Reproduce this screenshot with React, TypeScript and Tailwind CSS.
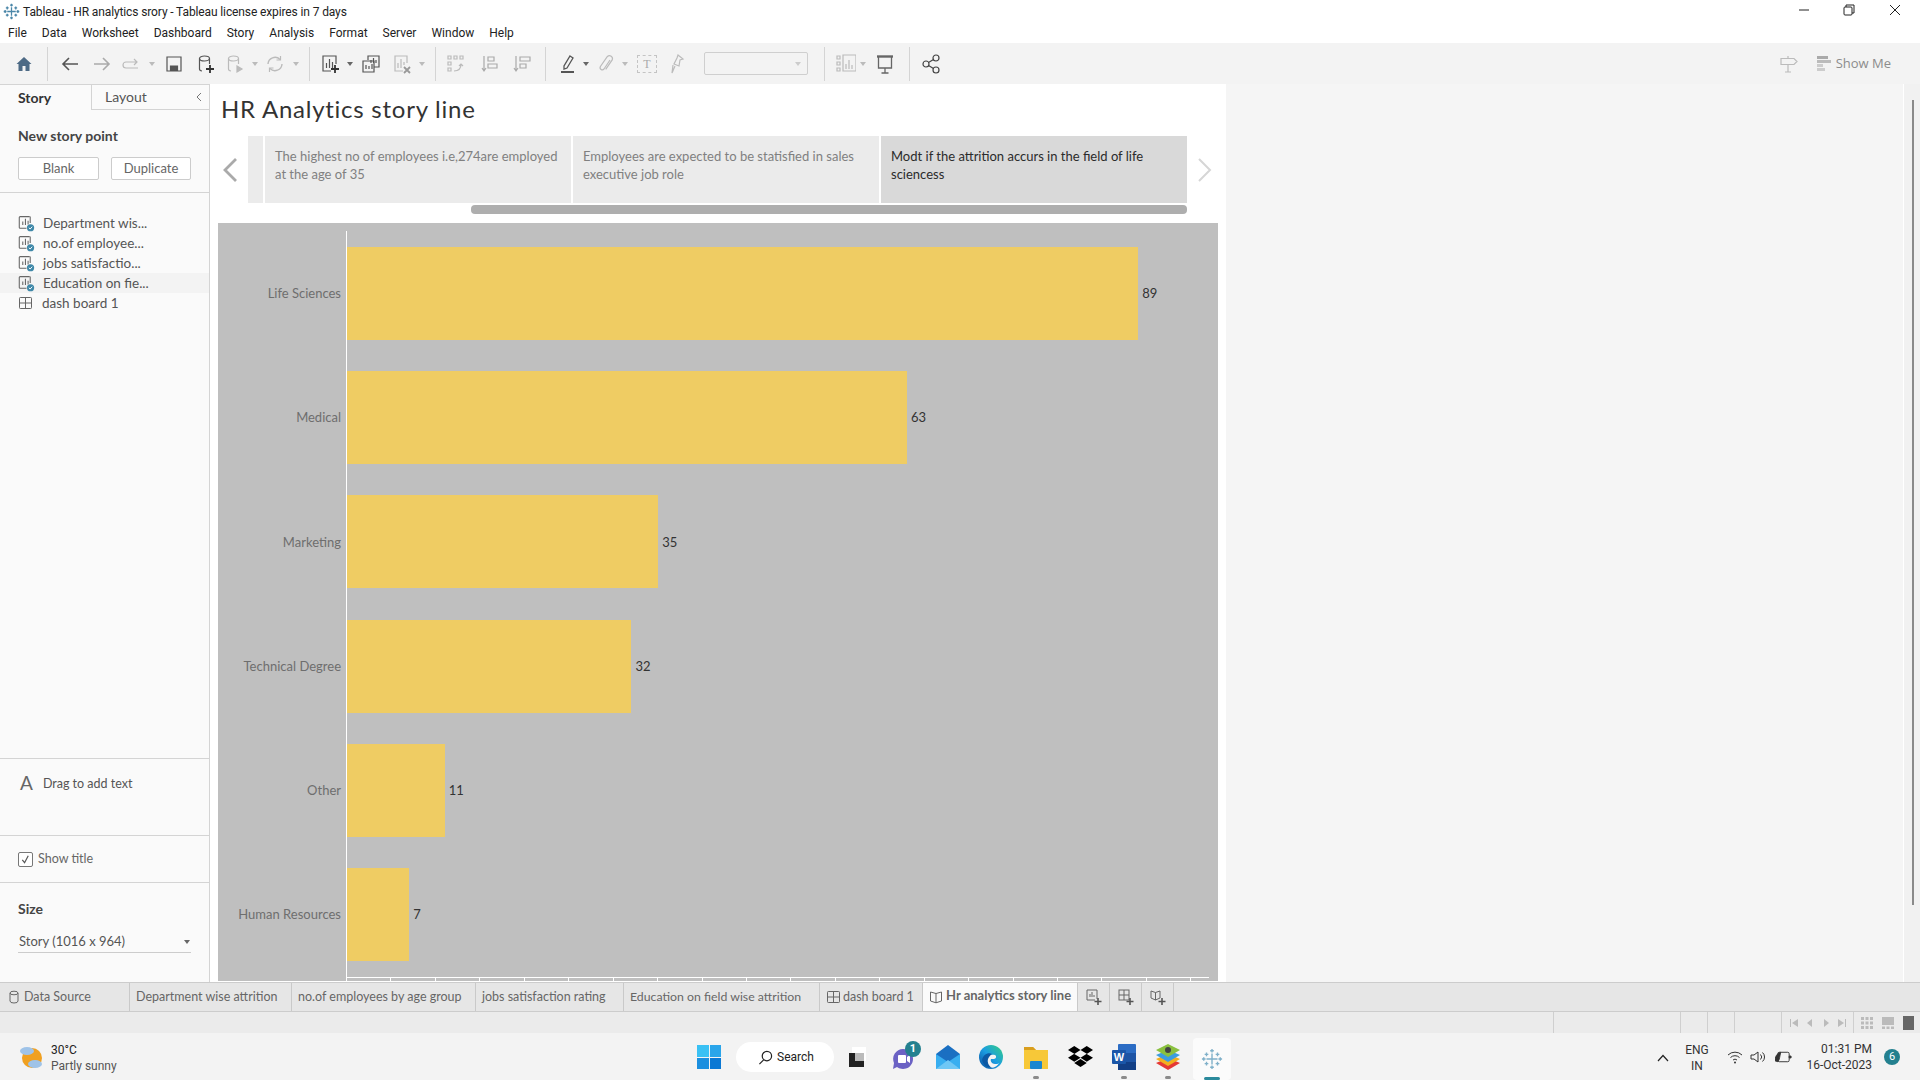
import { FaDropbox } from "react-icons/fa";
import { ReactNode } from "react";

const bars = [
  { label: "Life Sciences", value: 89 },
  { label: "Medical", value: 63 },
  { label: "Marketing", value: 35 },
  { label: "Technical Degree", value: 32 },
  { label: "Other", value: 11 },
  { label: "Human Resources", value: 7 },
];
const ticks = Array.from({ length: 20 }, (_, i) => i);

const Ico = ({ children, className = "", c = "#555" }: { children: ReactNode; className?: string; c?: string }) => (
  <svg viewBox="0 0 20 20" width="20" height="20" fill="none" stroke={c} strokeWidth="1.2" className={"shrink-0 " + className}>
    {children}
  </svg>
);
const Sep = ({ className }: { className: string }) => <div className={"w-px h-[34px] bg-[#d4d4d4] shrink-0 " + className} />;
const Caret = ({ className = "", c = "#bbb" }: { className?: string; c?: string }) => (
  <svg viewBox="0 0 6 4" width="6" height="4" className={"shrink-0 " + className}><path d="M0 0h6L3 4z" fill={c} /></svg>
);
const SheetBadge = () => (
  <svg viewBox="0 0 16 16" width="17" height="17" fill="none" className="shrink-0">
    <path d="M11 1.500H2a.8.8 0 0 0-.8.8v9.400a.8.8 0 0 0 .8.8h6" stroke="#666" />
    <path d="M4.500 9.500V6M7 9.500V3.500M9.500 9V5.500" stroke="#666" />
    <path d="M11.500 1.500v6" stroke="#666" />
    <circle cx="11.800" cy="12" r="3.400" fill="#3f88a8" />
    <path d="M10.200 12l1.200 1.200 2-2.200" stroke="#fff" strokeWidth="0.9" />
  </svg>
);
const GridIco = () => (
  <svg viewBox="0 0 16 16" width="16" height="16" fill="none" stroke="#666" className="shrink-0">
    <rect x="1.500" y="2.500" width="12" height="11" rx="0.8" /><path d="M7.500 2.500v11M1.500 8h12" />
  </svg>
);
const AddSmall = ({ kind }: { kind: "sheet" | "dash" | "story" }) => (
  <svg viewBox="0 0 18 18" width="18" height="18" fill="none" stroke="#666">
    {kind === "sheet" && <><path d="M12 11V2H2v10h8" /><path d="M5 9V6M7 9V4M9 9V7" /></>}
    {kind === "dash" && <><rect x="2" y="2" width="10" height="10" /><path d="M7 2v10M2 7h10" /></>}
    {kind === "story" && <><path d="M2 3l4.500 1.500L11 3v7l-4.500 2L2 10z" /><path d="M6.500 4.500V12" /></>}
    <path d="M13 10v7M9.500 13.500h7" strokeWidth="1.6" stroke="#555" />
  </svg>
);

const Toolbar = () => (
  <div className="h-[41px] bg-[#f3f3f3] flex items-center pl-[14px] shrink-0">
    <Ico><path d="M2.500 10L10 3l7.500 7h-2v7h-4v-5h-3v5h-4v-7z" fill="#4d6a85" stroke="none" /></Ico>
    <Sep className="ml-[13px]" />
    <Ico className="ml-[12px]"><path d="M18 10H3M9 4l-6 6 6 6" strokeWidth="1.6" /></Ico>
    <Ico className="ml-[12px]" c="#aaa"><path d="M2 10h15M11 4l6 6-6 6" strokeWidth="1.6" /></Ico>
    <Ico className="ml-[9px]" c="#bbb"><path d="M16 8H5a3 3 0 0 0 0 6h12M13 5l3 3-3 3" /></Ico>
    <Caret className="ml-[8px]" />
    <Ico className="ml-[9px]"><path d="M3 3h14v14H3z" /><path d="M6.500 17v-5h7v5" fill="#555" /></Ico>
    <Ico className="ml-[12px]"><ellipse cx="8.500" cy="4.500" rx="5" ry="2.500" /><path d="M3.500 4.500V15c0 1 1 1.800 2.500 2M13.500 4.500V10" /><path d="M14 11v8M10 15h8" stroke="#333" strokeWidth="1.800" /></Ico>
    <Ico className="ml-[9px]" c="#bbb"><ellipse cx="8.500" cy="4.500" rx="5" ry="2.500" /><path d="M3.500 4.500V15c0 1 1 1.800 2.500 2M13.500 4.500V10" /><path d="M12 12l5 3-5 3z" fill="#bbb" /></Ico>
    <Caret className="ml-[7px]" />
    <Ico className="ml-[7px]" c="#bbb"><path d="M3 10a7 7 0 0 1 12-4.500M17 10a7 7 0 0 1-12 4.500" strokeWidth="1.400" /><path d="M15.500 2v4h-4M4.500 18v-4h4" /></Ico>
    <Caret className="ml-[8px]" />
    <Sep className="ml-[10px]" />
    <Ico className="ml-[10px]"><path d="M16 10V2H3v15h8" /><path d="M6.500 14V9M9.500 14V5M12.500 14V8" /><path d="M15 11v8M11 15h8" stroke="#333" strokeWidth="1.800" /></Ico>
    <Caret className="ml-[7px]" c="#666" />
    <Ico className="ml-[8px]"><path d="M7 6V2h11v11h-5" /><path d="M10 9V6M12.500 9V4M15 9V6" /><path d="M2 7h11v11H2zM5 15v-4M8 15v-3M11 15v-5" /></Ico>
    <Ico className="ml-[11px]" c="#bbb"><path d="M15 9V2H3v15h8" /><path d="M6 14V9M9 14V5M12 11V8" /><path d="M12 13l6 6M18 13l-6 6" stroke="#999" strokeWidth="1.800" /></Ico>
    <Caret className="ml-[7px]" />
    <Sep className="ml-[10px]" />
    <Ico className="ml-[10px]" c="#bbb"><path d="M2 2h3v3H2zM8 2h3v3H8zM14 2h3v3h-3zM2 8h3v3H2zM2 14h3v3H2zM8 17c4 0 7-2 7-7M13 12l2-2 2 2" /></Ico>
    <Ico className="ml-[14px]" c="#aaa"><path d="M4 2v15M2 14l2 3 2-3M8 3h6v4H8zM8 10h9v4H8z" /></Ico>
    <Ico className="ml-[12px]" c="#aaa"><path d="M4 2v15M2 14l2 3 2-3M8 3h10v4H8zM8 10h6v4H8z" /></Ico>
    <Sep className="ml-[13px]" />
    <Ico className="ml-[12px]"><path d="M12 2l3 2-6 10-3 1 0-3z" strokeWidth="1.300" /><path d="M3 18h13" strokeWidth="2" /></Ico>
    <Caret className="ml-[5px]" c="#666" />
    <Ico className="ml-[7px]" c="#bbb"><path d="M14 6l-6 9a2.200 2.200 0 0 1-3.600-2.500l7-10a3 3 0 0 1 4.800 3.400l-6.500 9.500" /></Ico>
    <Caret className="ml-[6px]" />
    <div className="ml-[9px] w-[20px] h-[18px] border border-dashed border-[#c4c4c4] flex items-center justify-center text-[12px] text-[#aaa] font-['Liberation_Serif',serif] shrink-0">T</div>
    <Ico className="ml-[10px]" c="#bbb"><path d="M11 1l5 4-3 1-1 6-5-2 3-6zM8 12l-3 7 1-8" /></Ico>
    <div className="ml-[17px] w-[104px] h-[23px] border border-[#cfcfcf] rounded-[2px] flex items-center justify-end pr-[6px] shrink-0"><Caret c="#ccc" /></div>
    <Sep className="ml-[16px]" />
    <Ico className="ml-[11px]" c="#bbb"><path d="M1 2h3v3H1zM1 8h3v3H1zM1 14h3v3H1zM7 1h13v16H7zM10 15v-5M13 15V6M16 15v-4" /></Ico>
    <Caret className="ml-[4px]" />
    <Ico className="ml-[9px]" c="#666"><path d="M2 2.500h16" strokeWidth="2.400" /><path d="M3.500 3v11h13V3M10 14v5M6.500 19h7" strokeWidth="1.300" /></Ico>
    <Sep className="ml-[14px]" />
    <Ico className="ml-[12px]" c="#444"><circle cx="4" cy="10" r="3" /><circle cx="14" cy="4" r="3" /><circle cx="14" cy="16" r="3" /><path d="M6.500 8.500l5-3M6.500 11.500l5 3" /></Ico>
    <div className="ml-auto flex items-center pr-[29px]">
      <Ico c="#bbb"><path d="M2 4.500h13l3 3-3 3H2zM9 2v2.500M9 10.500V18M6 18h6" /></Ico>
      <svg viewBox="0 0 14 16" width="14" height="16" className="ml-[18px]">
        <path d="M0 0h11v3H0z" fill="#aaa" /><path d="M0 4h14v3H0z" fill="#bbb" /><path d="M0 8h6v3H0z" fill="#ccc" /><path d="M0 12h8v3H0z" fill="#ccc" />
      </svg>
      <span className="ml-[5px] text-[13px] text-[#8c8c8c] font-['Open_Sans',sans-serif]">Show Me</span>
    </div>
  </div>
);

const StoryRow = ({ icon, label, active }: { icon: ReactNode; label: string; active?: boolean }) => (
  <div className={"h-[20px] flex items-center pl-[18px] gap-[8px] text-[13.500px] text-[#555] " + (active ? "bg-[#f3f3f3]" : "")}>
    {icon}
    <span>{label}</span>
  </div>
);

const Sidebar = () => (
  <div className="w-[210px] shrink-0 bg-[#fafafa] border-r border-[#d4d4d4] flex flex-col border-t">
    <div className="h-[25px] flex text-[14px] shrink-0">
      <div className="w-[92px] pl-[18px] pb-[1px] font-bold text-[#333] flex items-center border-r border-[#d4d4d4]">Story</div>
      <div className="flex-1 flex items-center pl-[13px] pb-[1px] text-[#555] border-b border-[#d4d4d4] relative bg-[#fafafa]">
        Layout
        <svg viewBox="0 0 8 10" width="8" height="10" className="absolute right-[6px] top-[7px]"><path d="M6 1L2 5l4 4" fill="none" stroke="#777" /></svg>
      </div>
    </div>
    <div className="h-[83px] border-b border-[#d4d4d4] px-[18px] shrink-0">
      <div className="mt-[16px] text-[14px] font-bold text-[#444] leading-[20px]">New story point</div>
      <div className="mt-[11px] flex justify-between w-[173px]">
        <div className="w-[81px] h-[23px] bg-white border border-[#ccc] rounded-[2px] text-[13px] text-[#666] flex items-center justify-center">Blank</div>
        <div className="w-[80px] h-[23px] bg-white border border-[#ccc] rounded-[2px] text-[13px] text-[#666] flex items-center justify-center">Duplicate</div>
      </div>
    </div>
    <div className="h-[566px] pt-[20px] border-b border-[#d4d4d4] shrink-0">
      <StoryRow icon={<SheetBadge />} label="Department wis..." />
      <StoryRow icon={<SheetBadge />} label="no.of employee..." />
      <StoryRow icon={<SheetBadge />} label="jobs satisfactio..." />
      <StoryRow icon={<SheetBadge />} label="Education on fie..." active />
      <StoryRow icon={<GridIco />} label="dash board 1" />
    </div>
    <div className="h-[77px] border-b border-[#d4d4d4] pl-[20px] pt-[13px] flex items-start gap-[10px] shrink-0">
      <span className="text-[19px] text-[#666] leading-[22px]">A</span>
      <span className="text-[12.500px] text-[#555] leading-[24px]">Drag to add text</span>
    </div>
    <div className="h-[47px] border-b border-[#d4d4d4] pl-[18px] flex items-center gap-[5px] shrink-0">
      <div className="w-[15px] h-[15px] border border-[#777] rounded-[2px] bg-white flex items-center justify-center">
        <svg viewBox="0 0 12 12" width="11" height="11"><path d="M2.500 6.500l2.500 3 4-7.500" fill="none" stroke="#555" strokeWidth="1.300" /></svg>
      </div>
      <span className="text-[12.500px] text-[#666]">Show title</span>
    </div>
    <div className="px-[18px] pt-[16px]">
      <div className="text-[14px] font-bold text-[#444] leading-[20px]">Size</div>
      <div className="mt-[12px] h-[22px] w-[173px] border-b border-[#ccc] flex items-center justify-between pl-px pr-[1px] text-[13px] text-[#555]">
        <span>Story (1016 x 964)</span>
        <Caret c="#666" />
      </div>
    </div>
  </div>
);

const StoryPoint = ({ text, active }: { text: string[]; active?: boolean }) => (
  <div className={"w-[306px] h-[67px] pl-[10px] pt-[11px] text-[13px] leading-[18px] " + (active ? "bg-[#d9d9d9] text-[#2b2b2b]" : "bg-[#ebebeb] text-[#808080]")}>
    {text.map((t) => <div key={t}>{t}</div>)}
  </div>
);

const Chart = () => (
  <div className="ml-[8px] mt-[9px] w-[1000px] h-[758px] bg-[#bfbfbf] pt-[8px] flex flex-col">
    <div className="flex h-[746px]">
      <div className="w-[129px] shrink-0 border-r border-white pt-[16px] pr-[5px] flex flex-col gap-[31.200px]">
        {bars.map((b) => (
          <div key={b.label} className="h-[93px] pt-[1px] flex items-center justify-end text-[13px] text-[#6e6e6e]">{b.label}</div>
        ))}
      </div>
      <div className="pt-[16px] flex flex-col gap-[31.200px]">
        {bars.map((b) => (
          <div key={b.label} className="h-[93px] flex items-center">
            <div className="h-[93px] bg-[#efcc63]" style={{ width: b.value * 8.89 }} />
            <span className="ml-[4px] pt-[1px] text-[13px] text-[#333]">{b.value}</span>
          </div>
        ))}
      </div>
    </div>
    <div className="ml-[128px] w-[863px] border-t border-white flex h-[4px]">
      {ticks.map((t) => <div key={t} className="w-[44.450px] shrink-0 border-l border-white h-[4px]" />)}
    </div>
  </div>
);

const Story = () => (
  <div className="w-[1016px] shrink-0 bg-white flex flex-col">
    <div className="h-[52px] pl-[11px] pt-[8px] text-[24px] leading-[34px] text-[#333] tracking-[0.75px]">HR Analytics story line</div>
    <div className="h-[67px] flex items-center">
      <div className="w-[38px] flex justify-center pl-[2px]">
        <svg viewBox="0 0 16 26" width="16" height="26"><path d="M14 2L3 13l11 11" fill="none" stroke="#aaa" strokeWidth="2.800" /></svg>
      </div>
      <div className="w-[15px] h-[67px] bg-[#ebebeb] mr-[2px]" />
      <div className="flex gap-[2px]">
        <StoryPoint text={["The highest no of employees i.e,274are employed", "at the age of 35"]} />
        <StoryPoint text={["Employees are expected to be statisfied in sales", "executive job role"]} />
        <StoryPoint active text={["Modt if the attrition accurs in the field of life", "sciencess"]} />
      </div>
      <div className="ml-[10px]">
        <svg viewBox="0 0 16 26" width="16" height="26"><path d="M2 2l11 11L2 24" fill="none" stroke="#d6d6d6" strokeWidth="2" /></svg>
      </div>
    </div>
    <div className="ml-[261px] mt-[2px] w-[716px] h-[9px] rounded-[4px] bg-[#aeaeae]" />
    <Chart />
  </div>
);

const Tab = ({ children, className }: { children: ReactNode; className: string }) => (
  <div className={"h-full border-r border-[#c9c9c9] flex items-center shrink-0 text-[#666] " + className}>{children}</div>
);

const TabBar = () => (
  <div className="h-[30px] shrink-0 bg-[#e6e6e6] border-t border-b border-[#cccccc] flex">
    <Tab className="w-[130px] pl-[9px] gap-[5px] text-[12.500px]">
      <svg viewBox="0 0 10 14" width="10" height="14" fill="none" stroke="#666"><ellipse cx="5" cy="3" rx="4" ry="1.800" /><path d="M1 3v8q0 2 4 2t4-2V3" /></svg>
      Data Source
    </Tab>
    <Tab className="w-[162px] pl-[6px] text-[12.500px]">Department wise attrition</Tab>
    <Tab className="w-[184px] pl-[6px] text-[12.500px]">no.of employees by age group</Tab>
    <Tab className="w-[148px] pl-[6px] text-[12.500px]">jobs satisfaction rating</Tab>
    <Tab className="w-[196px] pl-[6px] text-[12.300px]">Education on field wise attrition</Tab>
    <Tab className="w-[103px] pl-[6px] gap-[1px] text-[12.500px]"><GridIco />dash board 1</Tab>
    <Tab className="w-[155px] pl-[6px] gap-[3px] bg-[#fafafa] font-bold text-[13px]">
      <svg viewBox="0 0 14 14" width="14" height="14" fill="none" stroke="#666"><path d="M1.500 2l5.500 1.500L12.500 2v9L7 12.800 1.500 11zM7 3.500v9.300" /></svg>
      <span className="-translate-y-px">Hr analytics story line</span>
    </Tab>
    <Tab className="w-[32px] justify-center"><AddSmall kind="sheet" /></Tab>
    <Tab className="w-[32px] justify-center"><AddSmall kind="dash" /></Tab>
    <Tab className="w-[32px] justify-center"><AddSmall kind="story" /></Tab>
  </div>
);

const StatusBar = () => (
  <div className="h-[21px] shrink-0 bg-[#ebebeb] flex">
    <div className="w-[1553px] shrink-0" />
    <div className="w-[127px] border-l border-[#cfcfcf] shrink-0" />
    <div className="w-[27px] border-l border-[#cfcfcf] shrink-0" />
    <div className="w-[27px] border-l border-[#cfcfcf] shrink-0" />
    <div className="w-[47px] border-l border-[#cfcfcf] shrink-0" />
    <div className="w-[72px] border-l border-[#cfcfcf] shrink-0 flex items-center justify-center gap-[8px]">
      <svg viewBox="0 0 8 8" width="8" height="8" fill="#bbb"><path d="M0 0h1v8H0zM8 0v8L2 4z" /></svg>
      <svg viewBox="0 0 8 8" width="8" height="8" fill="#bbb"><path d="M6 0v8L1 4z" /></svg>
      <svg viewBox="0 0 8 8" width="8" height="8" fill="#bbb"><path d="M2 0v8l5-4z" /></svg>
      <svg viewBox="0 0 8 8" width="8" height="8" fill="#bbb"><path d="M7 0h1v8H7zM0 0v8l6-4z" /></svg>
    </div>
    <div className="flex-1 border-l border-[#cfcfcf] flex items-center pl-[7px] gap-[9px]">
      <svg viewBox="0 0 12 12" width="12" height="14" fill="#bbb"><path d="M0 0h3v3H0zM4.500 0h3v3h-3zM9 0h3v3H9zM0 4.500h3v3H0zM4.500 4.500h3v3h-3zM9 4.500h3v3H9zM0 9h3v3H0zM4.500 9h3v3h-3zM9 9h3v3H9z" /></svg>
      <svg viewBox="0 0 12 12" width="12" height="14" fill="#bbb"><path d="M0 0h12v8H0zM0 9.500h3V12H0zM4.500 9.500h3V12h-3zM9 9.500h3V12H9z" /></svg>
      <div className="w-[11px] h-[14px] bg-[#666]" />
    </div>
  </div>
);

const Taskbar = () => (
  <div className="h-[48px] shrink-0 bg-[#f3f3f3] flex items-center relative font-['Roboto',sans-serif]">
    <svg viewBox="0 0 24 24" width="24" height="24" className="ml-[19px]">
      <circle cx="13" cy="13" r="10" fill="#f0a020" />
      <ellipse cx="8" cy="6" rx="7" ry="4" fill="#9fc3e8" /><ellipse cx="16" cy="19" rx="7" ry="4" fill="#9fc3e8" />
    </svg>
    <div className="ml-[8px] text-[12px] leading-[16px] pt-[1px]">
      <div className="text-[#222]">30°C</div>
      <div className="text-[#555]">Partly sunny</div>
    </div>
    <div className="absolute left-[697px] top-[12px] w-[24px] h-[24px] grid grid-cols-2 gap-[1px]">
      <div className="bg-[#3ac1f4]" /><div className="bg-[#2aa5ea]" /><div className="bg-[#1b8fdf]" /><div className="bg-[#0a78d4]" />
    </div>
    <div className="absolute left-[736px] top-[9px] w-[98px] h-[30px] rounded-full bg-white flex items-center pl-[22px] gap-[4px] text-[12px] text-[#222]">
      <svg viewBox="0 0 16 16" width="15" height="15" fill="none" stroke="#222" strokeWidth="1.300"><circle cx="9.500" cy="6.500" r="5" /><path d="M6 10.500L1.500 15" /></svg>
      Search
    </div>
    {/* app icons */}
    <div className="absolute left-[848px] top-[14px] w-[18px] h-[20px]">
      <div className="absolute right-0 top-0 w-[14px] h-[14px] bg-white" />
      <div className="absolute left-[1px] bottom-0 w-[15px] h-[14px] bg-[#222]" />
      <div className="absolute left-[7px] top-[6px] w-[9px] h-[8px] bg-[#bbb]" />
    </div>
    <svg viewBox="0 0 24 24" width="24" height="26" className="absolute left-[891px] top-[13px]">
      <path d="M12 2a10 10 0 1 1-6 18l-4 2 1-6A10 10 0 0 1 12 2z" fill="#6b62c4" />
      <rect x="7" y="8" width="8" height="8" rx="1" fill="#fff" /><path d="M16 10l3-2v8l-3-2z" fill="#fff" />
    </svg>
    <div className="absolute left-[905px] top-[8px] w-[16px] h-[16px] rounded-full bg-[#23808f] text-white text-[11px] font-bold flex items-center justify-center">1</div>
    <svg viewBox="0 0 24 24" width="24" height="24" className="absolute left-[936px] top-[12px]">
      <path d="M0 9l12-9 12 9v15H0z" fill="#1a6fc2" /><path d="M0 9l12 8 12-8v15H0z" fill="#38aef0" /><path d="M0 24l12-9 12 9z" fill="#6fc7f5" />
    </svg>
    <svg viewBox="0 0 24 24" width="24" height="24" className="absolute left-[979px] top-[12px]">
      <defs><linearGradient id="edge" x1="1" y1="0" x2="0" y2="1"><stop offset="0" stopColor="#35d07f" /><stop offset="0.5" stopColor="#1b9de2" /><stop offset="1" stopColor="#0b4f9e" /></linearGradient></defs>
      <circle cx="12" cy="12" r="12" fill="url(#edge)" />
      <path d="M8 15c0-4 4-6 8-5 2 1 1 4-1 4h-3c-1 2 1 5 4 5 2 0 3 0 4-1-2 4-7 6-10 4-2-2-2-5-2-7z" fill="#f3f3f3" />
      <path d="M9 14c-1 4 1 7 4 9-5 0-9-3-10-8 1-5 6-8 10-6-2 1-3 3-4 5z" fill="#0c59a4" />
    </svg>
    <svg viewBox="0 0 24 24" width="24" height="24" className="absolute left-[1024px] top-[12px]">
      <path d="M0 2h9l3 3h12v19H0z" fill="#f7c838" /><path d="M0 2h9l3 3H0z" fill="#d99e1e" /><rect x="6" y="16" width="12" height="8" rx="1" fill="#1a86d0" />
    </svg>
    <FaDropbox className="absolute left-[1068px] top-[11px] text-black" size={25} />
    <svg viewBox="0 0 24 26" width="24" height="26" className="absolute left-[1112px] top-[11px]">
      <rect x="6" y="0" width="18" height="26" rx="1" fill="#2b6cc4" /><rect x="6" y="9" width="18" height="9" fill="#1d54a5" /><rect x="6" y="18" width="18" height="8" fill="#123f86" />
      <rect x="0" y="6" width="14" height="14" rx="1" fill="#1a56a8" /><text x="7" y="17" fontSize="11" fontWeight="700" textAnchor="middle" fill="#fff" fontFamily="Liberation Sans">W</text>
    </svg>
    <svg viewBox="0 0 24 26" width="24" height="26" className="absolute left-[1156px] top-[11px]">
      <path d="M12 14l12 5-12 7-12-7z" fill="#e53935" /><path d="M12 10l12 5-12 7-12-7z" fill="#f2b01e" /><path d="M12 6l12 5-12 7-12-7z" fill="#3c9de0" /><path d="M12 0l12 6-12 7-12-7z" fill="#8ac03f" />
      <circle cx="12" cy="6" r="3" fill="#444" />
    </svg>
    <div className="absolute left-[1193px] top-[5px] w-[38px] h-[42px] bg-[#fbfbfb] rounded-[4px] flex items-center justify-center">
      <svg viewBox="0 0 24 24" width="22" height="24" stroke="#7fb0c9" strokeWidth="1.500">
        <path d="M12 6v12M6 12h12M12 1v4M10 3h4M12 19v4M10 21h4M1 12h4M3 10v4M19 12h4M21 10v4M6 5v4M4 7h4M18 5v4M16 7h4M6 15v4M4 17h4M18 15v4M16 17h4" />
      </svg>
      <div className="absolute bottom-0 left-[11px] w-[16px] h-[3px] rounded-full bg-[#2b8a9c]" />
    </div>
    <div className="absolute left-[1033px] bottom-[2px] w-[6px] h-[3px] rounded-full bg-[#8a8a8a]" />
    <div className="absolute left-[1121px] bottom-[2px] w-[6px] h-[3px] rounded-full bg-[#8a8a8a]" />
    <div className="absolute left-[1165px] bottom-[2px] w-[6px] h-[3px] rounded-full bg-[#8a8a8a]" />
    {/* tray */}
    <svg viewBox="0 0 12 8" width="12" height="8" className="absolute left-[1657px] top-[21px]"><path d="M1 7l5-5.500L11 7" fill="none" stroke="#222" strokeWidth="1.200" /></svg>
    <div className="absolute left-[1680px] top-[9px] w-[34px] text-center text-[12px] leading-[16px] text-[#333]">ENG<br />IN</div>
    <svg viewBox="0 0 16 14" width="16" height="14" fill="none" stroke="#333" className="absolute left-[1727px] top-[17px]"><path d="M1 5a10 10 0 0 1 14 0M3.500 7.500a6.500 6.500 0 0 1 9 0M6 10a3 3 0 0 1 4 0" /><circle cx="8" cy="12.500" r="1" fill="#333" stroke="none" /></svg>
    <svg viewBox="0 0 16 14" width="16" height="14" fill="none" stroke="#333" className="absolute left-[1750px] top-[17px]"><path d="M1 5h3l4-3v10l-4-3H1zM10.500 4.500a3.500 3.500 0 0 1 0 5M12.500 2.500a6 6 0 0 1 0 9" /></svg>
    <svg viewBox="0 0 18 12" width="17" height="12" fill="none" stroke="#333" className="absolute left-[1775px] top-[18px]"><rect x="3" y="1" width="12" height="10" rx="1.500" /><path d="M15 5h2v2h-2z" fill="#333" /><path d="M0 10c0-4 2-8 6-9-1 4-1 8-3 10z" fill="#333" /></svg>
    <div className="absolute right-[48px] top-[8px] text-right text-[12px] leading-[16px] text-[#333]">01:31 PM<br />16-Oct-2023</div>
    <div className="absolute left-[1884px] top-[16px] w-[16px] h-[16px] rounded-full bg-[#23808f] text-white text-[11px] flex items-center justify-center">6</div>
  </div>
);

export default function App() {
  return (
    <div className="w-[1920px] h-[1080px] overflow-hidden flex flex-col bg-[#f5f5f5] font-['Lato',sans-serif]">
      <div className="h-[43px] bg-white shrink-0 font-['Roboto',sans-serif] relative">
        <div className="h-[23px] flex items-center pl-[3px] gap-[3px] text-[12px] text-[#222] tracking-[-0.12px]">
          <svg viewBox="0 0 24 24" width="17" height="17" stroke="#4a86a8" strokeWidth="1.800">
            <path d="M12 6v12M6 12h12M12 1v4M10 3h4M12 19v4M10 21h4M1 12h4M3 10v4M19 12h4M21 10v4M6 5v4M4 7h4M18 5v4M16 7h4M6 15v4M4 17h4M18 15v4M16 17h4" />
          </svg>
          Tableau - HR analytics srory - Tableau license expires in 7 days
        </div>
        <div className="h-[20px] flex items-center pl-[8px] gap-[15px] text-[12px] text-[#222]">
          {["File", "Data", "Worksheet", "Dashboard", "Story", "Analysis", "Format", "Server", "Window", "Help"].map((m) => (
            <span key={m}>{m}</span>
          ))}
        </div>
        <div className="absolute right-0 top-0 h-[22px] flex items-center">
          <svg viewBox="0 0 12 12" width="12" height="12" className="absolute right-[110px] top-[4px]"><path d="M1 6h10" stroke="#222" /></svg>
          <svg viewBox="0 0 12 12" width="12" height="12" fill="none" stroke="#222" className="absolute right-[65px] top-[4px]"><rect x="1" y="3" width="8" height="8" rx="1" /><path d="M3 3V1h8v8H9" /></svg>
          <svg viewBox="0 0 12 12" width="12" height="12" className="absolute right-[19px] top-[4px]"><path d="M1 1l10 10M11 1L1 11" stroke="#222" /></svg>
        </div>
      </div>
      <Toolbar />
      <div className="h-[898px] flex shrink-0">
        <Sidebar />
        <Story />
        <div className="flex-1" />
        <div className="w-[17px] shrink-0 bg-[#f1f1f1] border-l border-white pl-[8px] pt-[16px]">
          <div className="w-[2px] h-[805px] bg-[#8a8a8a]" />
        </div>
      </div>
      <TabBar />
      <StatusBar />
      <Taskbar />
    </div>
  );
}
